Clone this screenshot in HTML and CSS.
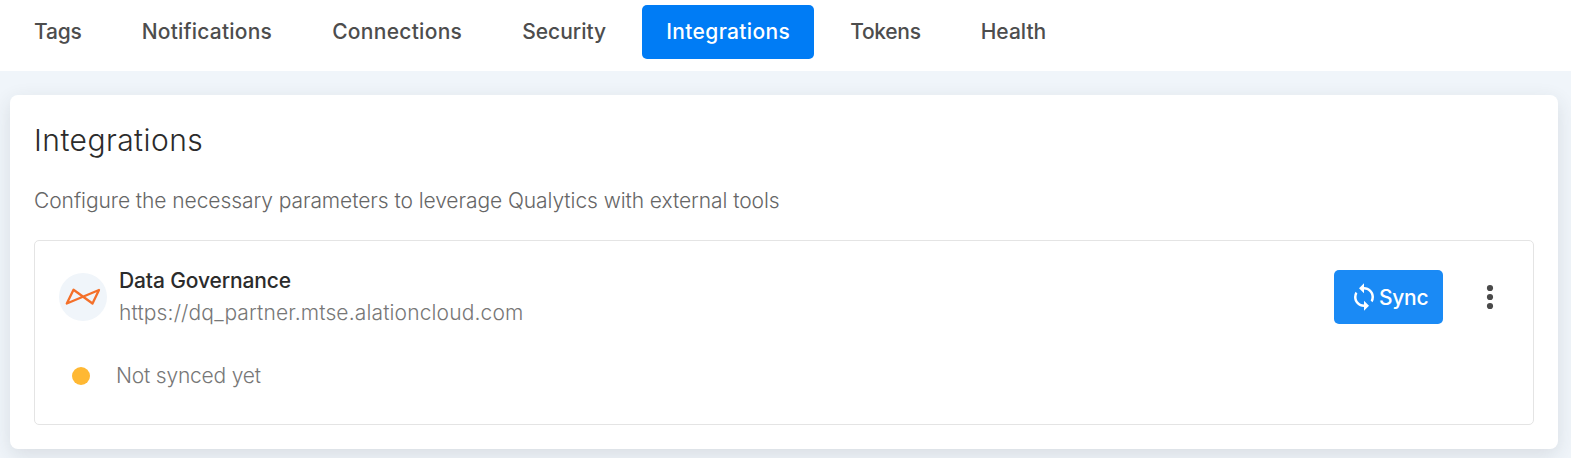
FILE: index.html
```
<!DOCTYPE html>
<html lang="en">
<head>
<meta charset="utf-8">
<title>Integrations</title>
<link rel="stylesheet" href="styles.css">
</head>
<body>
<nav class="tabs">
  <a class="tab tab-tags">Tags</a>
  <a class="tab tab-notifications">Notifications</a>
  <a class="tab tab-connections">Connections</a>
  <a class="tab tab-security">Security</a>
  <a class="tab tab-integrations active">Integrations</a>
  <a class="tab tab-tokens">Tokens</a>
  <a class="tab tab-health">Health</a>
</nav>
<main class="card">
  <h1 class="heading">Integrations</h1>
  <p class="description">Configure the necessary parameters to leverage Qualytics with external tools</p>
  <section class="integration">
    <div class="row">
      <div class="avatar">
        <svg class="logo" viewBox="0 0 48 48"><path d="M7.8 30.5 14.5 16.8 33.5 30.5 40 17Z" fill="none" stroke="#f4702a" stroke-width="2.3" stroke-linejoin="round"/></svg>
      </div>
      <div class="info">
        <div class="name">Data Governance</div>
        <div class="url">https://dq_partner.mtse.alationcloud.com</div>
      </div>
      <button class="sync">
        <svg class="sync-icon" viewBox="0 0 24 24"><path fill="#fff" d="M12 4V1L8 5l4 4V6c3.31 0 6 2.69 6 6 0 1.01-.25 1.97-.7 2.8l1.46 1.46A7.93 7.93 0 0 0 20 12c0-4.42-3.58-8-8-8zm0 14c-3.31 0-6-2.69-6-6 0-1.01.25-1.97.7-2.8L5.24 7.74A7.93 7.93 0 0 0 4 12c0 4.42 3.58 8 8 8v3l4-4-4-4v3z"/></svg>
        <span class="sync-label">Sync</span>
      </button>
      <svg class="more" viewBox="0 0 8 26"><g fill="#4a4a4a"><circle cx="4" cy="4" r="3.1"/><circle cx="4" cy="13" r="3.1"/><circle cx="4" cy="22" r="3.1"/></g></svg>
    </div>
    <div class="status"><i class="dot"></i><span>Not synced yet</span></div>
  </section>
</main>
</body>
</html>
```
FILE: styles.css
```
* { box-sizing: border-box; }
body { margin: 0; height: 458px; overflow: hidden; background: #f0f5fa; font-family: Inter, "Liberation Sans", sans-serif; font-size: 21px; color: #666; }
.tabs { display: flex; gap: 12px; height: 71px; padding: 5px 0 0 10px; background: #fff; }
.tab { height: 54px; padding: 0 24px; border-radius: 5px; font-weight: 500; line-height: 53px; color: #4d4d4d; white-space: nowrap; }
.tab-tags { letter-spacing: -.2px; }
.tab-notifications { letter-spacing: .22px; }
.tab-connections { letter-spacing: .29px; }
.tab-integrations { letter-spacing: .36px; }
.tab-tokens { letter-spacing: -.3px; }
.active { background: #007cf5; color: #fff; }
.card { height: 354px; margin: 24px 13px 0 10px; padding: 24px; background: #fff; border-radius: 8px; box-shadow: 0 6px 20px rgba(40, 50, 60, .12); }
.heading { margin: 0; font-size: 30px; line-height: 42px; font-weight: 300; letter-spacing: .45px; color: #2b2b2b; }
.description { margin: 24px 0 0; line-height: 32px; font-weight: 300; letter-spacing: -.07px; white-space: nowrap; }
.integration { height: 185px; margin-top: 23px; padding: 24px; border: 1px solid #e4e4e4; border-radius: 5px; }
.row { display: flex; align-items: center; height: 64px; }
.avatar { width: 48px; height: 48px; border-radius: 50%; background: #f0f5fa; }
.logo { display: block; width: 48px; height: 48px; }
.info { margin-left: 12px; line-height: 32px; white-space: nowrap; }
.name { font-weight: 500; letter-spacing: -.12px; color: #2b2b2b; }
.url { font-weight: 300; letter-spacing: .14px; color: #777; }
.sync { display: flex; align-items: center; width: 109px; height: 54px; margin-left: auto; padding: 0 0 0 15px; border: 0; border-radius: 5px; background: #1a8af5; color: #fff; font: 500 21px Inter, sans-serif; }
.sync-icon { flex: none; width: 30px; height: 30px; }
.sync-label { letter-spacing: -.3px; }
.more { width: 8px; height: 26px; margin: 0 15px 0 43px; }
.status { display: flex; align-items: center; margin-top: 31px; padding-left: 13px; line-height: 32px; font-weight: 300; letter-spacing: -.2px; color: #777; }
.dot { width: 18px; height: 18px; margin-right: 26px; border-radius: 50%; background: #ffb833; }
```
